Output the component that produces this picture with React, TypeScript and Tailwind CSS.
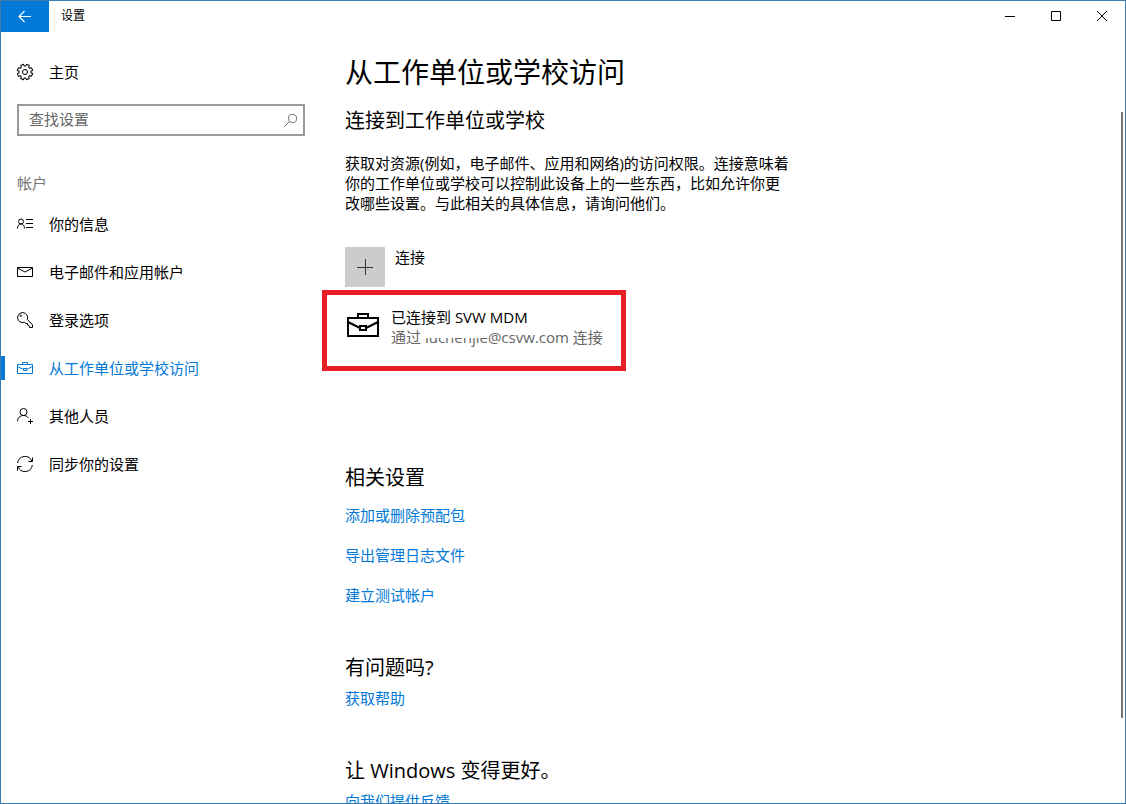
import { useState } from 'react';
import type { ReactNode } from 'react';

const Icon = ({ children, className = 'size-4' }: { children: ReactNode; className?: string }) => (
  <svg viewBox="0 0 16 16" fill="none" stroke="currentColor" strokeWidth="1" className={`shrink-0 overflow-visible ${className}`} aria-hidden="true">
    {children}
  </svg>
);

const GearIcon = () => (
  <Icon>
    <circle cx="8" cy="8" r="2.5" />
    <path
      transform="rotate(22.5 8 8)"
      strokeLinejoin="round"
      d="M13.800 6.400 15.700 6.500v3L13.800 9.600 13.200 10.900 14.500 12.400 12.400 14.500 10.900 13.200 9.600 13.800 9.500 15.700h-3L6.400 13.800 5.100 13.200 3.600 14.500 1.500 12.400 2.800 10.900 2.200 9.600.3 9.500v-3L2.200 6.400 2.800 5.100 1.500 3.600 3.600 1.500 5.100 2.800 6.400 2.200 6.500.3h3L9.600 2.200 10.900 2.800 12.400 1.500 14.500 3.600 13.200 5.100z"
    />
  </Icon>
);

const ContactIcon = () => (
  <Icon>
    <circle cx="4" cy="5.500" r="2.500" />
    <path d="M.5 12.500C.5 9.500 2 8 4 8s3.500 1.500 3.500 4.500M9 3.500h7M9 7.500h7M9 11.500h7" />
  </Icon>
);

const MailIcon = () => (
  <Icon>
    <path d="M.5 3.500h15v9H.5zM.5 4l7.500 4 7.500-4" />
  </Icon>
);

const KeyIcon = () => (
  <Icon>
    <path d="M10.300 7.300a5 5 0 1 0-3 3l1.700 1.200h1.500v1.500l1.500.5.5 2h3v-2.500z" />
    <circle cx="3.800" cy="3.800" r=".7" />
  </Icon>
);

const BriefcaseIcon = () => (
  <Icon>
    <path d="M.5 4.500h15v9H.5zM5.500 4.500v-2h5v2M.5 6.500l6 3M15.500 6.500l-6 3M6.500 8.500h3v2h-3z" />
  </Icon>
);

const PersonAddIcon = () => (
  <Icon>
    <circle cx="6.500" cy="4" r="3.500" />
    <path d="M.5 13.500c0-3.500 2.500-6 6-6 2 0 3.700.8 4.700 2.300M13.500 11v5M11 13.500h5" />
  </Icon>
);

const SyncIcon = () => (
  <Icon>
    <path d="M.7 7A7.300 7.300 0 0 1 14.900 5.500M15.300 9A7.300 7.300 0 0 1 1.100 10.500M15.500 1.500v4h-4M.5 14.500v-4h4" />
  </Icon>
);

const navItems = [
  { label: '你的信息', icon: <ContactIcon /> },
  { label: '电子邮件和应用帐户', icon: <MailIcon /> },
  { label: '登录选项', icon: <KeyIcon /> },
  { label: '从工作单位或学校访问', icon: <BriefcaseIcon /> },
  { label: '其他人员', icon: <PersonAddIcon /> },
  { label: '同步你的设置', icon: <SyncIcon /> },
];

const relatedLinks = ['添加或删除预配包', '导出管理日志文件', '建立测试帐户'];

const TitleBar = () => (
  <header className="flex shrink-0 items-start">
    <button type="button" aria-label="返回" className="flex h-[31px] w-12 items-center justify-center bg-[#0078d7] text-white">
      <Icon>
        <path d="M2 7.500h12M7.500 2 2 7.500 7.500 13" strokeWidth="1.200" />
      </Icon>
    </button>
    <span className="flex h-[30px] flex-1 items-center pl-3 text-xs">设置</span>
    <button type="button" aria-label="最小化" className="flex h-[30px] w-[46px] items-center justify-center">
      <svg viewBox="0 0 10 10" className="size-[10px]" stroke="currentColor"><path d="M0 5.500h10" /></svg>
    </button>
    <button type="button" aria-label="最大化" className="flex h-[30px] w-[46px] items-center justify-center">
      <svg viewBox="0 0 10 10" className="size-[10px]" fill="none" stroke="currentColor"><path d="M.5.5h9v9h-9z" /></svg>
    </button>
    <button type="button" aria-label="关闭" className="flex h-[30px] w-[46px] items-center justify-center">
      <svg viewBox="0 0 10 10" className="size-[10px]" stroke="currentColor"><path d="M0 0l10 10M10 0 0 10" /></svg>
    </button>
  </header>
);

const Sidebar = () => {
  const [active, setActive] = useState(3);
  const [query, setQuery] = useState('');

  return (
    <aside className="w-[304px] shrink-0">
      <button type="button" className="mt-4 flex h-12 w-full items-center gap-4 pl-4">
        <GearIcon />
        主页
      </button>

      <label className="mt-2 ml-4 flex h-8 items-center border-2 border-[#999] pr-[6px] pl-[10px] text-[#666]">
        <input
          type="text"
          aria-label="查找设置"
          placeholder="查找设置"
          value={query}
          onChange={(e) => setQuery(e.target.value)}
          className="min-w-0 flex-1 pb-[2px] outline-none placeholder:text-[#666]"
        />
        <Icon className="size-[13px]">
          <circle cx="10.500" cy="5.500" r="5" strokeWidth="1.200" />
          <path d="M7 9 .5 15.500" strokeWidth="1.200" />
        </Icon>
      </label>

      <h2 className="mt-[35px] ml-4 leading-6 text-[#767676]">帐户</h2>

      <nav className="mt-[5px]">
        {navItems.map((item, i) => (
          <button
            key={item.label}
            type="button"
            onClick={() => setActive(i)}
            className={`flex h-12 w-full items-center ${i === active ? 'text-[#0078d7]' : ''}`}
          >
            <span className={`h-6 w-1 ${i === active ? 'bg-[#0078d7]' : ''}`} />
            <span className="flex items-center gap-4 pl-3">
              {item.icon}
              {item.label}
            </span>
          </button>
        ))}
      </nav>
    </aside>
  );
};

const Content = () => (
  <main className="min-w-0 flex-1 overflow-hidden pl-10">
    <h1 className="mt-5 text-[28px] leading-10">从工作单位或学校访问</h1>
    <h2 className="mt-[13px] text-xl leading-8">连接到工作单位或学校</h2>
    <p className="mt-4 max-w-[446px] leading-5">
      获取对资源(例如，电子邮件、应用和网络)的访问权限。连接意味着你的工作单位或学校可以控制此设备上的一些东西，比如允许你更改哪些设置。与此相关的具体信息，请询问他们。
    </p>

    <button type="button" className="mt-[34px] flex items-start gap-[10px]">
      <span className="flex size-10 items-center justify-center bg-[#ccc] text-[#333]">
        <Icon>
          <path d="M8.500 0v16M0 8.500h16" />
        </Icon>
      </span>
      <span className="leading-5">连接</span>
    </button>

    {/* 已连接的帐户 */}
    <section className="mt-[3px] -ml-[23px] flex h-[81px] w-[304px] gap-3 border-5 border-[#e81e25] pt-3 pl-5">
      <svg viewBox="0 0 32 26" className="mt-[6px] h-[26px] w-8 shrink-0" fill="none" stroke="currentColor" strokeWidth="2" aria-hidden="true">
        <path d="M1 5h30v18H1zM11 5V1h10v4M1 9l12 6M31 9l-12 6M13 13h6v4h-6z" />
      </svg>
      <div className="leading-5">
        <p>已连接到 SVW MDM</p>
        <p className="text-[#666]">
          通过{' '}
          <span className="relative">
            luchenjie
            {/* 遮住邮箱名的上半部分 */}
            <span className="absolute inset-x-0 top-0 h-[11px] bg-white" />
          </span>
          @csvw.com 连接
        </p>
      </div>
    </section>

    <h2 className="mt-[91px] text-xl leading-8">相关设置</h2>
    <ul className="mt-[11px] space-y-5 leading-5">
      {relatedLinks.map((text) => (
        <li key={text}>
          <a href="#" className="text-[#0078d7]">{text}</a>
        </li>
      ))}
    </ul>

    <h2 className="mt-[47px] text-xl leading-8">有问题吗?</h2>
    <a href="#" className="mt-1 block leading-5 text-[#0078d7]">获取帮助</a>

    <h2 className="mt-[47px] text-xl leading-8">让 Windows 变得更好。</h2>
    <a href="#" className="mt-1 block leading-5 text-[#0078d7]">向我们提供反馈</a>
  </main>
);

export default function App() {
  return (
    <div
      lang="zh-CN"
      className="flex h-screen flex-col overflow-hidden border border-[#3a7cb0] bg-white font-['Open_Sans','Noto_Sans_CJK_SC',sans-serif] text-[15px] text-black"
    >
      <TitleBar />
      <div className="flex min-h-0 flex-1">
        <Sidebar />
        <Content />
        {/* 滚动条 */}
        <div className="mt-20 mr-[2px] h-[606px] w-[2px] shrink-0 bg-[#767676]" />
      </div>
    </div>
  );
}
